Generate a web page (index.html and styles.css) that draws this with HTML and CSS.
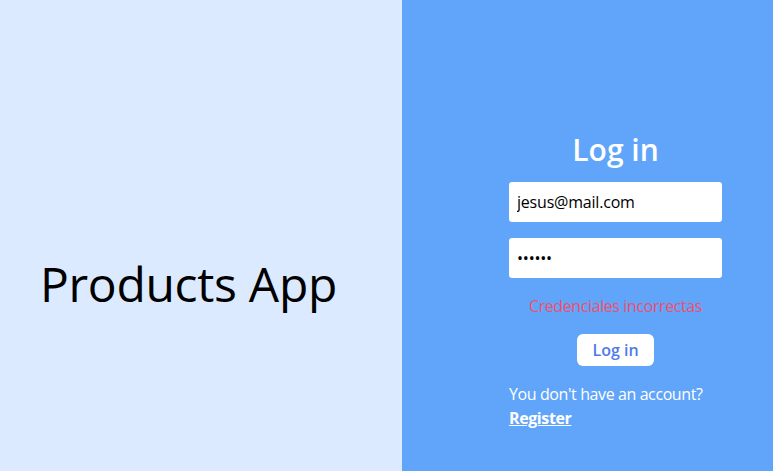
FILE: index.html
```html
<!DOCTYPE html>
<html lang="es">
<head>
<meta charset="utf-8">
<title>Products App</title>
<link rel="stylesheet" href="styles.css">
</head>
<body>
<main class="page">
  <section class="brand">
    <h1 class="brand-title">Products App</h1>
  </section>
  <section class="auth">
    <form class="login-form">
      <h2 class="login-title">Log in</h2>
      <input class="field" type="email" value="jesus@mail.com">
      <input class="field" type="password" value="123456">
      <p class="error">Credenciales incorrectas</p>
      <button class="btn" type="button">Log in</button>
      <p class="hint">You don't have an account?<br><a class="link" href="#">Register</a></p>
    </form>
  </section>
</main>
</body>
</html>
```
FILE: styles.css
```css
* { box-sizing: border-box; }
html, body { margin: 0; padding: 0; }
body {
  font-family: "Open Sans", "Noto Sans", sans-serif;
  height: 471px;
  overflow: hidden;
}
.page {
  display: grid;
  grid-template-columns: 402px 1fr;
  height: 471px;
}
.brand {
  background: #dbeafe;
  display: flex;
  align-items: center;
  justify-content: center;
  padding: 97px 25px 0 0;
}
.brand-title {
  margin: 0;
  font-size: 48px;
  font-weight: 500;
  line-height: 1;
  letter-spacing: -0.3px;
  color: #000;
}
.auth {
  background: #60a5fa;
  display: flex;
  align-items: flex-start;
  justify-content: center;
  padding: 132px 0 0 56px;
}
.login-form {
  width: 213px;
  display: flex;
  flex-direction: column;
  align-items: center;
}
.login-title {
  margin: 0 0 14px;
  font-size: 30px;
  font-weight: 600;
  line-height: 36px;
  color: #fff;
}
.field {
  width: 213px;
  height: 40px;
  border: none;
  border-radius: 3px;
  padding: 0 8px;
  font: inherit;
  font-size: 16px;
  letter-spacing: -0.2px;
  color: #000;
  background: #fff;
  margin-bottom: 16px;
  outline: none;
}
.error {
  margin: 0 0 16px;
  font-size: 16px;
  line-height: 24px;
  letter-spacing: -0.4px;
  color: #f0506e;
}
.btn {
  width: 77px;
  height: 32px;
  border: none;
  border-radius: 6px;
  background: #fff;
  color: #4f7bea;
  font: inherit;
  font-size: 16px;
  font-weight: 600;
  cursor: pointer;
}
.hint {
  align-self: stretch;
  margin: 16px 0 0;
  font-size: 16px;
  line-height: 24px;
  letter-spacing: -0.4px;
  color: #fff;
}
.link {
  color: #fff;
  font-weight: 700;
  text-decoration: underline;
}
```
